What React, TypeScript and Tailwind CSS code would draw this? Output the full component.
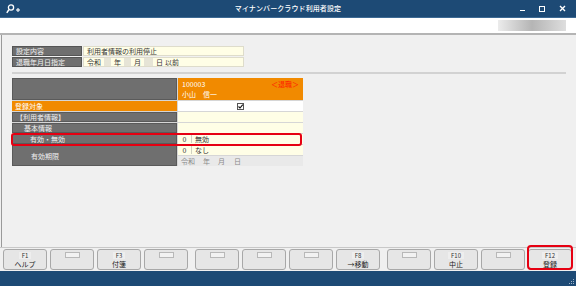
import React from "react";

const FONT = { fontFamily: '"Noto Sans CJK JP", "Noto Sans", sans-serif' };

type Key = { code?: string; label?: string };

const KEY_GROUPS: Key[][] = [
  [{ code: "F1", label: "ヘルプ" }, {}, { code: "F3", label: "付箋" }, {}],
  [{}, {}, {}, { code: "F8", label: "→移動" }],
  [{}, { code: "F10", label: "中止" }, {}, { code: "F12", label: "登録" }],
];

function TitleBar() {
  return (
    <div className="relative flex h-[18px] items-center border-b border-[#3d6a94] bg-[#1d4a75] text-white">
      <svg width="16" height="10" viewBox="0 0 16 10" className="ml-[6px]">
        <circle cx="5" cy="3.5" r="2.6" fill="none" stroke="white" strokeWidth="1.3" />
        <line x1="3" y1="5.5" x2="0.8" y2="8.8" stroke="white" strokeWidth="1.5" />
        <line x1="10" y1="6" x2="14" y2="6" stroke="white" strokeWidth="1.1" />
        <line x1="12" y1="4" x2="12" y2="8" stroke="white" strokeWidth="1.1" />
      </svg>
      <div className="absolute left-0 right-0 top-0 flex h-[17px] items-center justify-center text-[7px] font-medium tracking-[0.1px]">
        マイナンバークラウド利用者設定
      </div>
      <div className="ml-auto mr-[10px] flex items-center gap-[14px]">
        <div className="mt-[4px] h-[1.5px] w-[5px] bg-white" />
        <div className="h-[6px] w-[6px] border-[1.5px] border-white" />
        <svg width="7" height="7" viewBox="0 0 7 7">
          <path d="M1 1L6 6M6 1L1 6" stroke="white" strokeWidth="1.4" />
        </svg>
      </div>
    </div>
  );
}

function SmallBox({ w }: { w: number }) {
  return <span className="mx-[3px] inline-block h-[8px] bg-[#e6e4d6]" style={{ width: w }} />;
}

function TopTable() {
  return (
    <div className="grid w-[232px] grid-cols-[70px_1fr] gap-x-[1px] gap-y-[1px] text-[7px] leading-[10px]">
      <div className="h-[10px] border border-[#555] bg-[#6f6f6f] pl-[3px] leading-[8px] text-[#f2f2f2]">設定内容</div>
      <div className="h-[10px] border border-[#dedccb] bg-[#fffee6] pl-[3px] leading-[8px] text-[#333]">利用者情報の利用停止</div>
      <div className="h-[10px] border border-[#555] bg-[#6f6f6f] pl-[3px] leading-[8px] text-[#f2f2f2]">退職年月日指定</div>
      <div className="flex h-[10px] items-center border border-[#dedccb] bg-[#fffee6] pl-[3px] leading-[8px] text-[#333]">
        <span>令和</span>
        <SmallBox w={7} />
        <span>年</span>
        <SmallBox w={7} />
        <span>月</span>
        <SmallBox w={9} />
        <span>日</span>
        <span className="ml-[2px]">以前</span>
      </div>
    </div>
  );
}

function Label({ children, indent = 3, className = "" }: { children?: React.ReactNode; indent?: number; className?: string }) {
  return (
    <div
      className={`flex items-center border border-[#5a5a5a] bg-[#6f6f6f] text-[#f0f0f0] ${className}`}
      style={{ paddingLeft: indent }}
    >
      {children}
    </div>
  );
}

function MainTable() {
  return (
    <div className="relative w-[291px]">
      <div className="grid grid-cols-[165px_125px] gap-[1px] bg-[#d6d6d6] text-[7px] leading-[8px]">
        <Label className="h-[22px]" />
        <div className="flex h-[22px] flex-col justify-center gap-[2px] bg-[#f18a00] px-[4px] text-white">
          <div className="flex justify-between">
            <span>100003</span>
            <span className="text-[#ff1a00]">＜退職＞</span>
          </div>
          <div>小山　信一</div>
        </div>

        <div className="flex h-[10px] items-center bg-[#f18a00] pl-[3px] text-white">登録対象</div>
        <div className="flex h-[10px] items-center justify-center bg-white">
          <svg width="7" height="7" viewBox="0 0 7 7">
            <rect x="0.5" y="0.5" width="6" height="6" fill="white" stroke="#555" />
            <path d="M1.5 3.5L3 5L5.8 1.6" fill="none" stroke="#111" strokeWidth="1.1" />
          </svg>
        </div>

        <Label className="h-[10px]">【利用者情報】</Label>
        <div className="h-[10px] bg-[#fffee6]" />

        <Label className="h-[10px]" indent={11}>基本情報</Label>
        <div className="h-[10px] bg-[#fffee6]" />

        <Label className="h-[10px]" indent={17}>有効・無効</Label>
        <div className="flex h-[10px] items-center bg-[#fffee6] text-[#333]">
          <span className="w-[14px] border-r border-[#d0d0c0] text-center">0</span>
          <span className="pl-[3px]">無効</span>
        </div>

        <Label className="row-span-2 h-[21px]" indent={18}>有効期限</Label>
        <div className="flex h-[10px] items-center bg-[#fffee6] text-[#333]">
          <span className="w-[14px] border-r border-[#d0d0c0] text-center">0</span>
          <span className="pl-[3px]">なし</span>
        </div>
        <div className="flex h-[10px] items-center bg-[#e9e9e9] pl-[3px] text-[#8a8a8a]">
          <span>令和</span>
          <span className="ml-[8px]">年</span>
          <span className="ml-[8px]">月</span>
          <span className="ml-[9px]">日</span>
        </div>
      </div>
      <div className="absolute left-[-1px] top-[55px] h-[13px] w-[291px] rounded-[3px] border-[2px] border-[#e60012]" />
    </div>
  );
}

function FnButton({ k }: { k: Key }) {
  return (
    <div className="flex h-[21px] w-[44px] flex-col items-center rounded-[3px] border border-[#a8a8a8] bg-[#e6e6e6] pt-[2px] text-[#222]">
      {k.code ? (
        <>
          <div className="h-[7px] bg-[#eeeeee] px-[3px] text-[6px] leading-[7px] text-[#333]">{k.code}</div>
          <div className="mt-[1px] text-[7px] leading-[8px]">{k.label}</div>
        </>
      ) : (
        <div className="h-[6px] w-[15px] border border-[#b8b8b8] bg-[#f2f2f2]" />
      )}
    </div>
  );
}

export default function App() {
  return (
    <div className="flex h-[286px] w-[576px] flex-col overflow-hidden bg-[#f0f0f0]" style={FONT}>
      <TitleBar />
      <div className="flex h-[17px] items-center justify-end border-b-2 border-[#b4b4b4] bg-white pr-[10px]">
        <div className="h-[11px] w-[68px] bg-gradient-to-r from-[#ececec] via-[#b5b5b5] to-[#dedede]" />
      </div>
      <div className="ml-[1px] flex flex-1 flex-col border-l border-[#9a9a9a] pl-[10px] pr-[10px] pt-[11px]">
        <TopTable />
        <div className="mt-[5px] h-[2px] w-[554px] bg-[#d2d2d2]" />
        <div className="mt-[4px]">
          <MainTable />
        </div>
      </div>
      <div className="relative flex h-[24px] items-start gap-[7px] border-t border-[#c8c8c8] bg-[#f0f0f0] pl-[3px] pt-[1px]">
        {KEY_GROUPS.map((g, gi) => (
          <div key={gi} className="flex gap-[3px]">
            {g.map((k, i) => (
              <FnButton key={i} k={k} />
            ))}
          </div>
        ))}
        <div className="absolute left-[527px] top-[-3px] h-[25px] w-[46px] rounded-[4px] border-[2px] border-[#e60012]" />
      </div>
      <div className="relative h-[15px] bg-[#1d4a75]">
        <svg width="6" height="6" viewBox="0 0 6 6" className="absolute bottom-[1px] right-[1px]">
          <rect x="4" y="0" width="1" height="1" fill="#9fb3c8" />
          <rect x="2" y="2" width="1" height="1" fill="#9fb3c8" />
          <rect x="4" y="2" width="1" height="1" fill="#9fb3c8" />
          <rect x="0" y="4" width="1" height="1" fill="#9fb3c8" />
          <rect x="2" y="4" width="1" height="1" fill="#9fb3c8" />
          <rect x="4" y="4" width="1" height="1" fill="#9fb3c8" />
        </svg>
      </div>
    </div>
  );
}
